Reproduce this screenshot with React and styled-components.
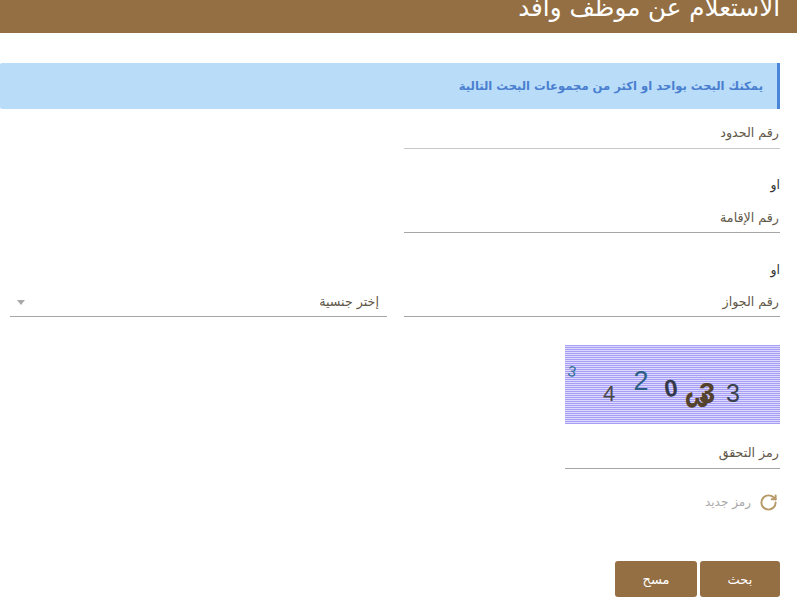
import React from 'react';
import styled, { createGlobalStyle } from 'styled-components';
import { RotateCw } from 'lucide-react';

const GlobalStyle = createGlobalStyle`
  html, body {
    margin: 0;
    padding: 0;
    background: #fff;
    overflow: hidden;
  }
  body {
    font-family: "DejaVu Sans", "Noto Sans", sans-serif;
  }
`;

const Page = styled.div`
  width: 797px;
  height: 600px;
  direction: rtl;
  overflow: hidden;
`;

const Header = styled.header`
  height: 33px;
  background: #946f43;
  overflow: hidden;
  padding-right: 17px;
`;

const Title = styled.h1`
  margin: -9px 0 0;
  font-size: 24.6px;
  line-height: 34px;
  font-weight: 400;
  color: #fff;
`;

const Content = styled.main`
  padding: 30px 17px 0 10px;
`;

const Notice = styled.div`
  height: 46px;
  margin-left: -10px;
  display: flex;
  align-items: center;
  padding-right: 14px;
  box-sizing: border-box;
  background: #b9dcf9;
  border-right: 3px solid #4a86d8;
  border-radius: 2px 0 0 2px;
  color: #4a7fd0;
  font-size: 11.6px;
  font-weight: 700;
`;

const FormGrid = styled.div`
  display: grid;
  grid-template-columns: 376px 377px;
  column-gap: 17px;
  align-items: end;
`;

const Field = styled.div`
  height: ${(p) => p.$height || 40}px;
  box-sizing: border-box;
  display: flex;
  align-items: flex-end;
  justify-content: space-between;
  padding: 0 ${(p) => p.$inset || 1}px ${(p) => p.$bottom || 7}px 7px;
  border-bottom: 1px solid ${(p) => p.$line || '#a6a6a6'};
  color: #5f5748;
  font-size: 12.7px;
  line-height: 16px;
`;

const OrLabel = styled.div`
  grid-column: 1 / -1;
  height: ${(p) => p.$height}px;
  display: flex;
  align-items: flex-end;
  color: #333;
  font-size: 12.5px;
  line-height: 16px;
`;

const Caret = styled.span`
  width: 0;
  height: 0;
  margin-bottom: 5px;
  border-left: 4px solid transparent;
  border-right: 4px solid transparent;
  border-top: 5px solid #a9a9a9;
`;

const CaptchaColumn = styled.div`
  width: 215px;
  margin-top: 28px;
`;

const CaptchaImage = styled.svg`
  display: block;
  width: 215px;
  height: 79px;
  background: repeating-linear-gradient(
    to bottom,
    #a79ff6 0,
    #a79ff6 1px,
    #dcd9fd 1px,
    #dcd9fd 2px
  );
`;

const CaptchaField = styled(Field)`
  margin-top: 15px;
`;

const Refresh = styled.div`
  margin-top: 24px;
  display: flex;
  align-items: center;
  gap: 8px;
  padding-right: 2px;
  color: #a8a8a8;
  font-size: 12px;
  line-height: 19px;
  svg {
    color: #b89a68;
  }
`;

const Actions = styled.div`
  margin-top: 49px;
  display: flex;
  gap: 3px;
`;

const Button = styled.button`
  width: ${(p) => p.$width}px;
  height: 36px;
  border: none;
  border-radius: 3px;
  background: #946f43;
  color: #fff;
  font-family: inherit;
  font-size: 13px;
  padding: 0;
`;

const digits = [
  { ch: '3', x: 7, y: 26, size: 15, rot: 10, fill: '#2f6f95', weight: 400 },
  { ch: '4', x: 44, y: 48, size: 22, rot: 0, fill: '#4a4a48', weight: 400 },
  { ch: '2', x: 76, y: 36, size: 27, rot: 0, fill: '#2d5f85', weight: 400 },
  { ch: '0', x: 106, y: 43, size: 24, rot: -8, fill: '#33384a', weight: 700 },
  { ch: '3', x: 142, y: 48, size: 29, rot: 0, fill: '#54422c', weight: 700 },
  { ch: '3', x: 131, y: 55, size: 31, rot: 90, fill: '#54422c', weight: 700 },
  { ch: '3', x: 168, y: 48, size: 25, rot: 0, fill: '#3a4250', weight: 400 },
];

const App = () => {
  return (
    <Page>
      <GlobalStyle />
      <Header>
        <Title>الاستعلام عن موظف وافد</Title>
      </Header>
      <Content>
        <Notice>يمكنك البحث بواحد او اكثر من مجموعات البحث التالية</Notice>
        <FormGrid>
          <Field $line="#c8c8c8">رقم الحدود</Field>
          <div />
          <OrLabel $height={44}>او</OrLabel>
          <Field $bottom={6}>رقم الإقامة</Field>
          <div />
          <OrLabel $height={45}>او</OrLabel>
          <Field $height={39} $bottom={6}>رقم الجواز</Field>
          <Field $height={39} $bottom={6} $inset={8}>
            إختر جنسية
            <Caret />
          </Field>
        </FormGrid>
        <CaptchaColumn>
          <CaptchaImage viewBox="0 0 215 79" role="img" aria-label="captcha">
            {digits.map((d, i) => (
              <text
                key={i}
                x={d.x}
                y={d.y}
                fontSize={d.size}
                fontWeight={d.weight}
                fontFamily="Liberation Sans, sans-serif"
                fill={d.fill}
                textAnchor="middle"
                dominantBaseline="central"
                transform={d.rot ? `rotate(${d.rot} ${d.x} ${d.y})` : undefined}
              >
                {d.ch}
              </text>
            ))}
          </CaptchaImage>
          <CaptchaField $height={30}>رمز التحقق</CaptchaField>
          <Refresh>
            <RotateCw size={19} strokeWidth={2.5} />
            رمز جديد
          </Refresh>
        </CaptchaColumn>
        <Actions>
          <Button $width={80}>بحث</Button>
          <Button $width={82}>مسح</Button>
        </Actions>
      </Content>
    </Page>
  );
};

export default App;
